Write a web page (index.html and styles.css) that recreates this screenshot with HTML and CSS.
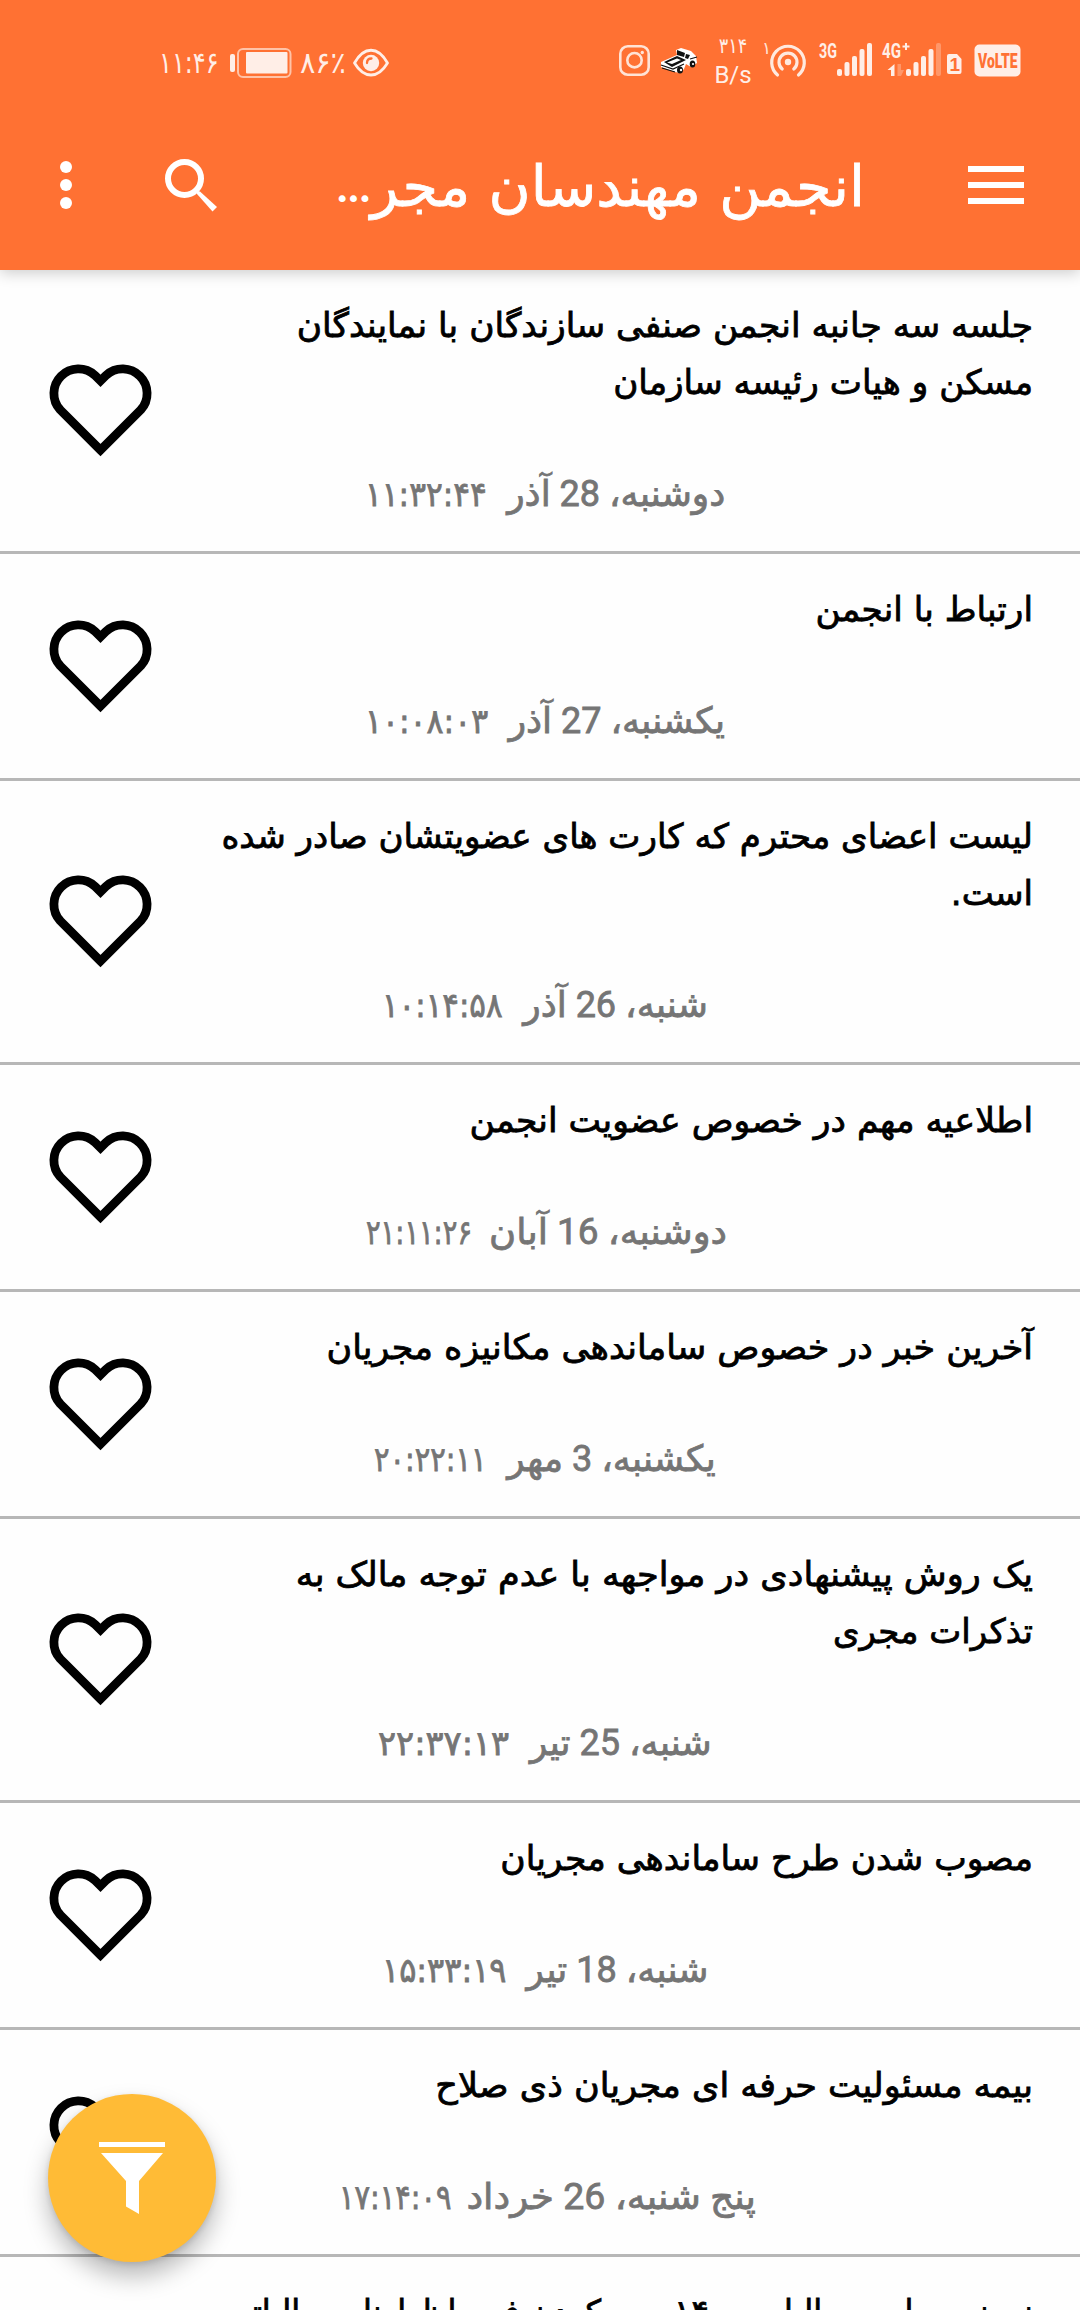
FILE: index.html
```html
<!DOCTYPE html>
<html lang="fa" dir="rtl">
<head>
<meta charset="utf-8">
<title>انجمن مهندسان مجری</title>
<link rel="stylesheet" href="styles.css">
</head>
<body>
<svg class="defs" aria-hidden="true">
  <symbol id="heart" viewBox="0 0 111 100"><path d="M55.5 90.1 15.2 49.8A24.5 24.5 0 0 1 49.8 15.2L55.5 20.9 61.2 15.2A24.5 24.5 0 0 1 95.8 49.8Z" fill="none" stroke="#000" stroke-width="8.800"/></symbol>
</svg>
<header class="header">
  <div class="status" dir="ltr">
    <span class="clock">۱۱:۴۶</span>
    <svg class="battery" width="62" height="30" viewBox="0 0 62 30"><rect x="0" y="6" width="5" height="18" rx="2" fill="#ffeee7"/><rect x="8" y="1" width="52.500" height="28" rx="5" fill="none" stroke="#ffc3a8" stroke-width="2"/><rect x="16" y="4" width="41.500" height="21.500" rx="1" fill="#ffeee7"/></svg>
    <span class="percent">۸۶٪</span>
    <svg class="eye" width="38" height="30" viewBox="0 0 38 30"><path d="M2.500 15C12-2 26-2 35.500 15 26 31 12 31 2.500 15Z" fill="none" stroke="#ffeee7" stroke-width="2.800" stroke-linejoin="round"/><circle cx="19" cy="15" r="8.200" fill="#ffeee7"/><path d="M15 15q0-4.500 4.500-4.500" fill="none" stroke="#ff7133" stroke-width="2.300" stroke-linecap="round"/></svg>
    <div class="tray">
      <svg width="40" height="60" viewBox="616 35 40 60" fill="none" stroke="#ffe3d6" stroke-width="2.600"><rect x="620.300" y="48.300" width="28.400" height="28.400" rx="7.500"/><circle cx="634.500" cy="62.200" r="7.200"/><circle cx="642.300" cy="54.500" r="1.700" fill="#ffe3d6" stroke="none"/></svg>
      <svg width="54" height="60" viewBox="656 35 54 60"><path d="M661 64 677 57 676 52 681 50 691 53 696 58 697 65 691 69 686 66 684 71 680 75 675 74 661 69Z" fill="#fff"/><path d="M664 64 677 58 686 62 672 69Z" fill="#111"/><path d="M667 64.500 677 60.500 681 62 672 66Z" fill="#fff"/><path d="M677 52 685 55 684 59 677 57ZM686 56 690 57 688 61 685 60Z" fill="#111"/><path d="M661 67 673 71 684 66M662 70 675 74M690 61 697 59" fill="none" stroke="#111" stroke-width="1.200"/><ellipse cx="680" cy="72" rx="3" ry="3.500" fill="#111"/><ellipse cx="692.500" cy="66" rx="2.800" ry="3.500" fill="#111"/><circle cx="681" cy="72" r="1.200" fill="#fff"/><circle cx="693" cy="66" r="1.100" fill="#fff"/></svg>
      <span class="speed"><span class="speed-value">۳۱۴</span><span class="speed-unit">B/s</span></span>
      <svg width="52" height="60" viewBox="760 35 52 60" fill="none" stroke="#ffe9df" stroke-width="3.200" stroke-linecap="round"><text class="tiny" x="762" y="56">۱</text><path d="M777.500 77A16.300 16.300 0 1 1 798.500 77M782.200 71A9 9 0 1 1 793.800 71"/><circle cx="788" cy="64" r="3.200" fill="#ffe9df" stroke="none"/></svg>
      <svg width="66" height="60" viewBox="812 35 66 60" fill="#ffeee7"><text class="net" x="819" y="60" textLength="18" lengthAdjust="spacingAndGlyphs">3G</text><rect x="837" y="71" width="5" height="7" rx="2"/><rect x="844.500" y="64" width="5" height="14" rx="2"/><rect x="852" y="58" width="5" height="20" rx="2"/><rect x="859.500" y="51" width="5" height="27" rx="2"/><rect x="867" y="45" width="5" height="33" rx="2"/></svg>
      <svg width="66" height="60" viewBox="878 35 66 60" fill="#ffeee7"><text class="net" x="882" y="60" textLength="19" lengthAdjust="spacingAndGlyphs">4G</text><path d="M902.500 47.500H905V45H907V47.500H909.500V49.500H907V52H905V49.500H902.500Z"/><path d="M894.500 66V78H891V72H887.500Z"/><path d="M897.500 66V78H901L904 72H901V66Z" opacity=".3"/><rect x="906" y="71" width="5" height="7" rx="2"/><rect x="913.500" y="64" width="5" height="14" rx="2"/><rect x="921" y="58" width="5" height="20" rx="2"/><rect x="928.500" y="51" width="5" height="27" rx="2"/><rect x="936" y="45" width="5" height="33" rx="2" opacity=".3"/></svg>
      <svg width="130" height="60" viewBox="944 35 130 60" fill="#ffeee7"><path d="M949 56H957L961.500 61V74Q961.500 76 959.500 76H949Q947 76 947 74V58Q947 56 949 56Z"/><text class="sim" x="949.500" y="73">1</text><rect x="974.500" y="46.500" width="46" height="32" rx="5"/><text class="volte" x="978" y="69.500" textLength="39.500" lengthAdjust="spacingAndGlyphs">VoLTE</text></svg>
    </div>
  </div>
  <div class="appbar">
    <svg class="menu" width="56" height="38" viewBox="0 0 56 38"><path d="M0 3H56M0 19H56M0 35H56" stroke="#fff" stroke-width="6"/></svg>
    <h1 class="app-title"><span>انجمن مهندسان مجر</span><span class="dots">...</span></h1>
    <svg class="search" width="54" height="54" viewBox="0 0 54 54"><circle cx="20.500" cy="20.500" r="16.500" fill="none" stroke="#fff" stroke-width="6"/><path d="M33 36V33L36 33.500 53 49 48.500 53.500Z" fill="#fff"/></svg>
    <svg class="more" width="12" height="48" viewBox="0 0 12 48" fill="#fff"><circle cx="6" cy="6" r="6"/><circle cx="6" cy="24" r="6"/><circle cx="6" cy="42" r="6"/></svg>
  </div>
</header>
<main class="list">
  <article class="item"><h2 class="title"><span style="--fit:1.014">جلسه سه جانبه انجمن صنفی سازندگان با نمایندگان</span><span style="--fit:1.007">مسکن و هیات رئیسه سازمان</span></h2><svg class="heart"><use href="#heart"/></svg><p class="date"><span class="day">دوشنبه، 28 آذر</span><span class="time" style="--fit:.92">۱۱:۳۲:۴۴</span></p></article>
  <article class="item"><h2 class="title"><span style="--fit:1.01">ارتباط با انجمن</span></h2><svg class="heart"><use href="#heart"/></svg><p class="date"><span class="day">یکشنبه، 27 آذر</span><span class="time" style="--fit:.93">۱۰:۰۸:۰۳</span></p></article>
  <article class="item"><h2 class="title"><span style="--fit:1.003">لیست اعضای محترم که کارت های عضویتشان صادر شده</span><span>است.</span></h2><svg class="heart"><use href="#heart"/></svg><p class="date"><span class="day">شنبه، 26 آذر</span><span class="time" style="--fit:.91">۱۰:۱۴:۵۸</span></p></article>
  <article class="item"><h2 class="title"><span style="--fit:1.018">اطلاعیه مهم در خصوص عضویت انجمن</span></h2><svg class="heart"><use href="#heart"/></svg><p class="date"><span class="day" style="--fit:1.025">دوشنبه، 16 آبان</span><span class="time" style="--fit:.8">۲۱:۱۱:۲۶</span></p></article>
  <article class="item"><h2 class="title"><span style="--fit:1.026">آخرین خبر در خصوص ساماندهی مکانیزه مجریان</span></h2><svg class="heart"><use href="#heart"/></svg><p class="date"><span class="day">یکشنبه، 3 مهر</span><span class="time" style="--fit:.85">۲۰:۲۲:۱۱</span></p></article>
  <article class="item"><h2 class="title"><span style="--fit:1.033">یک روش پیشنهادی در مواجهه با عدم توجه مالک به</span><span>تذکرات مجری</span></h2><svg class="heart"><use href="#heart"/></svg><p class="date"><span class="day">شنبه، 25 تیر</span><span class="time" style="--fit:.99">۲۲:۳۷:۱۳</span></p></article>
  <article class="item"><h2 class="title"><span style="--fit:1.016">مصوب شدن طرح ساماندهی مجریان</span></h2><svg class="heart"><use href="#heart"/></svg><p class="date"><span class="day">شنبه، 18 تیر</span><span class="time" style="--fit:.94">۱۵:۳۳:۱۹</span></p></article>
  <article class="item"><h2 class="title"><span style="--fit:1.031">بیمه مسئولیت حرفه ای مجریان ذی صلاح</span></h2><svg class="heart"><use href="#heart"/></svg><p class="date"><span class="day" style="--fit:1.04">پنج شنبه، 26 خرداد</span><span class="time" style="--fit:.85">۱۷:۱۴:۰۹</span></p></article>
  <article class="item"><h2 class="title"><span style="--fit:.947">نمونه محاسبه مالیات ۱۴۰۰ و پر کردن فرم اظهارنامه مالیاتی</span></h2></article>
</main>
<button class="fab" aria-label="فیلتر"><svg width="68" height="74" viewBox="0 0 68 74" fill="#fff"><path d="M1 1H67V6H1ZM3 12H65L41 40V73L28 65.500V40Z"/></svg></button>
</body>
</html>
```
FILE: styles.css
```css
* { box-sizing: border-box; }
html, body { margin: 0; height: 2310px; overflow: hidden; }
body {
  background: #fefefe;
  font-family: "DejaVu Sans", sans-serif;
  color: #000;
}
h1, h2, p { margin: 0; font-weight: 400; }
svg { display: block; flex: none; }
.defs { position: absolute; width: 0; height: 0; }

.header {
  position: relative;
  height: 270px;
  background: #ff7133;
  box-shadow: 0 3px 14px rgba(0, 0, 0, .2);
}
.status {
  display: flex;
  align-items: center;
  height: 125px;
  padding-left: 159px;
  color: #ffeee7;
}
.clock, .percent { font-size: 30px; line-height: 40px; white-space: nowrap; transform-origin: left; }
.clock { width: 71px; transform: scaleX(.8); }
.percent { width: 52px; margin-left: 8px; transform: scaleX(.95); }
.tray { display: flex; align-items: center; margin-left: 226px; }
.speed {
  display: flex;
  flex-direction: column;
  align-items: center;
  width: 50px;
  padding-right: 4px;
}
.speed-value { font-size: 21px; line-height: 24px; transform: scaleX(.84); }
.speed-unit { font: 24px/34px Roboto, sans-serif; }
.tiny { font-size: 17px; fill: #ffe3d6; stroke: none; }
.net { font: 700 20px Roboto, sans-serif; }
.sim { font: 700 19px "Liberation Sans", sans-serif; fill: #ff7133; }
.volte { font: 900 20px Roboto, sans-serif; fill: #ff7133; }

.appbar {
  display: flex;
  align-items: center;
  height: 120px;
  padding: 0 56px 0 60px;
}
.app-title {
  flex: none;
  display: flex;
  width: 530px;
  margin-right: 103px;
  padding-top: 3px;
  color: #fff;
  font-size: 56px;
  line-height: 90px;
  white-space: nowrap;
  -webkit-text-stroke: .8px;
  transform: scaleX(1.025);
  transform-origin: right;
}
.dots { font-family: Roboto, sans-serif; font-size: 42px; -webkit-text-stroke: 2px; }
.search { margin-right: auto; margin-left: 92px; }

.list { height: 2040px; overflow: hidden; }
.item {
  display: grid;
  grid-template: auto 57px / 1fr 111px;
  row-gap: 55px;
  padding: 27px 47px 28px 45px;
  border-bottom: 3px solid #b7b7b7;
}
.item:last-child { padding-bottom: 0; row-gap: 0; grid-template-rows: 57px; }
.title { grid-area: 1 / 1; font-size: 34px; line-height: 57px; -webkit-text-stroke: .8px; }
.title span {
  display: block;
  white-space: nowrap;
  transform: scaleX(var(--fit, 1));
  transform-origin: right;
}
.heart { grid-area: 1 / 2 / 3 / 3; width: 111px; height: 100px; align-self: center; }
.date {
  grid-area: 2 / 1 / 3 / 3;
  display: flex;
  justify-content: center;
  gap: 21px;
  padding-left: 12px;
  color: #757575;
  font: 400 36px/57px Roboto, "DejaVu Sans", sans-serif;
  white-space: nowrap;
  -webkit-text-stroke: .8px;
}
.day { transform: scaleX(var(--fit, 1)); transform-origin: center; }
.time {
  direction: ltr;
  width: calc(132px * var(--fit));
  font-family: "DejaVu Sans", sans-serif;
  font-size: 34px;
  transform: scaleX(var(--fit));
  transform-origin: left;
}

.fab {
  position: fixed;
  left: 48px;
  bottom: 48px;
  display: grid;
  place-items: center;
  width: 168px;
  height: 168px;
  padding: 0;
  border: 0;
  border-radius: 50%;
  background: #ffbb36;
  box-shadow: 0 14px 24px rgba(0, 0, 0, .28), 0 2px 6px rgba(0, 0, 0, .12);
}
```
